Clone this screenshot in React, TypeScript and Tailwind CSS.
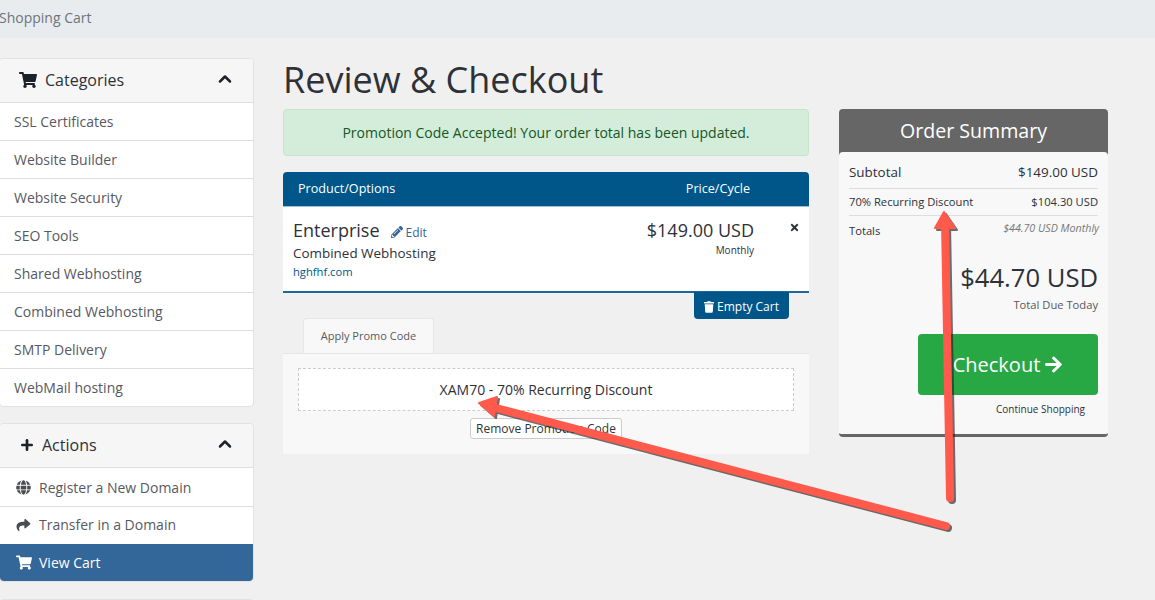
import { Fragment } from 'react';
import { ChevronUp, Plus } from 'lucide-react';
import { FaShoppingCart, FaGlobe, FaShare, FaPencilAlt, FaTimes, FaTrash, FaArrowRight } from 'react-icons/fa';

const categories = [
  'SSL Certificates',
  'Website Builder',
  'Website Security',
  'SEO Tools',
  'Shared Webhosting',
  'Combined Webhosting',
  'SMTP Delivery',
  'WebMail hosting',
];

function PanelHeading({ icon, title, gap }: { icon: React.ReactNode; title: string; gap: string }) {
  return (
    <div className="h-[44px] pb-px flex items-center pl-[19px] pr-[18px] bg-[#f6f6f6] border-b border-[#dddddd] rounded-t text-[#2e3138] text-[16px]">
      {icon}
      <span className={gap}>{title}</span>
      <ChevronUp className="ml-auto w-[20px] h-[20px] -mt-[2px]" strokeWidth={3} color="#1d2129" />
    </div>
  );
}

function Sidebar() {
  return (
    <aside className="w-[255px] shrink-0 -ml-px">
      <div className="bg-white border border-[#e2e2e2] rounded">
        <PanelHeading icon={<FaShoppingCart className="w-[18px] h-[16px] text-[#1d2129]" />} title="Categories" gap="ml-[8px]" />
        {categories.map((c, i) => (
          <div
            key={c}
            className={`flex items-center pl-[14px] text-[14px] text-[#58595f] ${i ? 'h-[38px] border-t border-[#dddddd]' : 'h-[37px]'}`}
          >
            {c}
          </div>
        ))}
      </div>

      <div className="mt-[16px] bg-white border border-[#e2e2e2] rounded">
        <PanelHeading icon={<Plus className="w-[16px] h-[16px]" strokeWidth={4} color="#1d2129" />} title="Actions" gap="ml-[7px]" />
        <div className="h-[38px] flex items-center pl-[16px] gap-[8px] text-[14px] text-[#58595f]">
          <FaGlobe className="w-[15px] h-[15px] text-[#4a4c52]" />
          Register a New Domain
        </div>
        <div className="h-[38px] flex items-center pl-[16px] pb-[2px] gap-[8px] text-[14px] text-[#58595f] border-t border-[#dddddd]">
          <FaShare className="w-[15px] h-[14px] text-[#4a4c52]" />
          Transfer in a Domain
        </div>
        <div className="h-[37px] flex items-center pl-[16px] gap-[7px] text-[14px] text-white bg-[#336699] rounded-b">
          <FaShoppingCart className="w-[16px] h-[15px]" />
          View Cart
        </div>
      </div>

      <div className="mt-[17px] h-[40px] bg-white border border-[#e2e2e2] rounded" />
    </aside>
  );
}

function CartColumn() {
  return (
    <div className="w-[526px] shrink-0">
      <div className="h-[47px] flex items-center justify-center bg-[#d4edda] border border-[#c3e6cb] rounded text-[14px] text-[#155724]">
        Promotion Code Accepted! Your order total has been updated.
      </div>

      <div className="mt-[16px] h-[34px] flex items-center bg-[#005689] text-white text-[12.6px] rounded-t">
        <span className="ml-[15px]">Product/Options</span>
        <span className="ml-auto mr-[59px]">Price/Cycle</span>
      </div>

      <div className="h-[87px] flex bg-white border-t border-[#9fc0d5] border-b-2 border-b-[#1e6899] pl-[10px] pr-[9px]">
        <div className="flex-1 pt-[11px]">
          <div className="flex items-baseline text-[#2e3138]">
            <span className="text-[18px] leading-[25px]">Enterprise</span>
            <FaPencilAlt className="ml-[11px] w-[12px] h-[12px] text-[#336699] self-center mt-[2px]" />
            <span className="ml-[3px] text-[12px] text-[#336699]">Edit</span>
          </div>
          <div className="text-[13.44px] leading-[19px] mt-[1px] text-[#2e3138]">Combined Webhosting</div>
          <div className="text-[11.2px] leading-[16px] mt-[1px] text-[#005689]">hghfhf.com</div>
        </div>
        <div className="text-right pt-[11px] mr-[35px] text-[#2e3138]">
          <div className="text-[18px] leading-[25px]">$149.00 USD</div>
          <div className="text-[10px] leading-[14px]">Monthly</div>
        </div>
        <FaTimes className="w-[11px] h-[11px] mt-[15px] text-[#2e3138]" />
      </div>

      <div className="flex justify-end pr-[20px] -mt-px">
        <div className="h-[27px] w-[95px] pt-[2px] flex items-center justify-center gap-[3px] bg-[#005689] text-white text-[12px] rounded-b">
          <FaTrash className="w-[10px] h-[12px]" />
          Empty Cart
        </div>
      </div>

      <div className="ml-[20px] mt-[-1px] w-[131px] h-[35px] flex items-center justify-center bg-[#f8f8f8] border border-b-0 border-[#e6e6e6] rounded-t text-[11px] text-[#58595f]">
        Apply Promo Code
      </div>
      <div className="h-[101px] bg-[#f8f8f8] border-t border-[#e6e6e6] px-[15px] pt-[14px] flex flex-col items-center">
        <div className="w-full h-[43px] flex items-center justify-center bg-white border border-dashed border-[#cccccc] text-[14px] text-[#2e3138]">
          XAM70 - 70% Recurring Discount
        </div>
        <div className="mt-[7px] h-[21px] w-[152px] flex items-center justify-center bg-white border border-[#cccccc] rounded-[3px] text-[12px] text-[#333333]">
          Remove Promotion Code
        </div>
      </div>
    </div>
  );
}

function OrderSummary() {
  return (
    <div className="w-[269px] shrink-0 h-[328px] rounded border-b-[3px] border-[#666666] bg-[#666666] overflow-hidden">
      <div className="h-[43px] flex items-center justify-center text-white text-[19.6px]">Order Summary</div>
      <div className="h-[282px] bg-[#f8f8f8] rounded-t px-[10px] flex flex-col">
        <div className="h-[37px] pt-[4px] flex items-center justify-between text-[13.44px] text-[#2e3138] border-b border-[#dddddd]">
          <span>Subtotal</span>
          <span>$149.00 USD</span>
        </div>
        <div className="h-[27px] flex items-center justify-between text-[11.2px] text-[#2e3138] border-b border-[#dddddd]">
          <span>70% Recurring Discount</span>
          <span>$104.30 USD</span>
        </div>
        <div className="h-[26px] flex justify-between pt-[4px]">
          <span className="text-[11.2px] leading-[22px] text-[#2e3138]">Totals</span>
          <span className="text-[10.7px] leading-[16px] italic text-[#777777] -mr-px">$44.70 USD Monthly</span>
        </div>
        <div className="mt-[18px] text-right text-[25.6px] leading-[35px] text-[#2e3138]">$44.70 USD</div>
        <div className="mt-[2px] text-right text-[11.2px] leading-[16px] text-[#58595f]">Total Due Today</div>
        <div className="mt-[21px] ml-auto w-[180px] h-[61px] flex items-center justify-center gap-[4px] bg-[#28a745] text-white text-[20px] rounded">
          Checkout
          <FaArrowRight className="w-[19px] h-[19px]" />
        </div>
        <div className="mt-[7px] text-right pr-[13px] text-[10px] leading-[14px] text-[#2e3138]">Continue Shopping</div>
      </div>
    </div>
  );
}

// the two red annotation arrows painted over the screenshot
function Arrows() {
  const arrows = [
    { line: 'M946 526 L492 407', head: '479,403 497,397 494,416' },
    { line: 'M950 498 L945 222', head: '944,212 935,228 955,228' },
  ];
  return (
    <svg className="absolute left-0 top-0 pointer-events-none" width="1155" height="600" viewBox="0 0 1155 600">
      {[1, 0].map((shadow) => (
        <Fragment key={shadow}>
          {arrows.map((a) => (
            <g
              key={a.line}
              transform={shadow ? 'translate(2 2)' : undefined}
              opacity={shadow ? 0.65 : 1}
              fill={shadow ? '#222222' : '#ff5a4c'}
              stroke={shadow ? '#222222' : '#ff5a4c'}
            >
              <path d={a.line} fill="none" strokeWidth="8" strokeLinecap="round" />
              <polygon points={a.head} strokeWidth="2" strokeLinejoin="round" />
            </g>
          ))}
        </Fragment>
      ))}
    </svg>
  );
}

export default function App() {
  return (
    <div className="relative w-[1155px] h-[600px] overflow-hidden bg-[#f0f0f0] font-['Open_Sans',sans-serif]">
      <div className="h-[38px] pb-[3px] flex items-center -ml-px bg-[#e9ecef] text-[14px] text-[#6c757d]">Shopping Cart</div>
      <div className="flex gap-[29px] pt-[20px]">
        <Sidebar />
        <div>
          <h1 className="text-[36px] leading-[44px] text-[#2e3138] mb-[7px]">Review &amp; Checkout</h1>
          <div className="flex gap-[30px]">
            <CartColumn />
            <OrderSummary />
          </div>
        </div>
      </div>
      <Arrows />
    </div>
  );
}
